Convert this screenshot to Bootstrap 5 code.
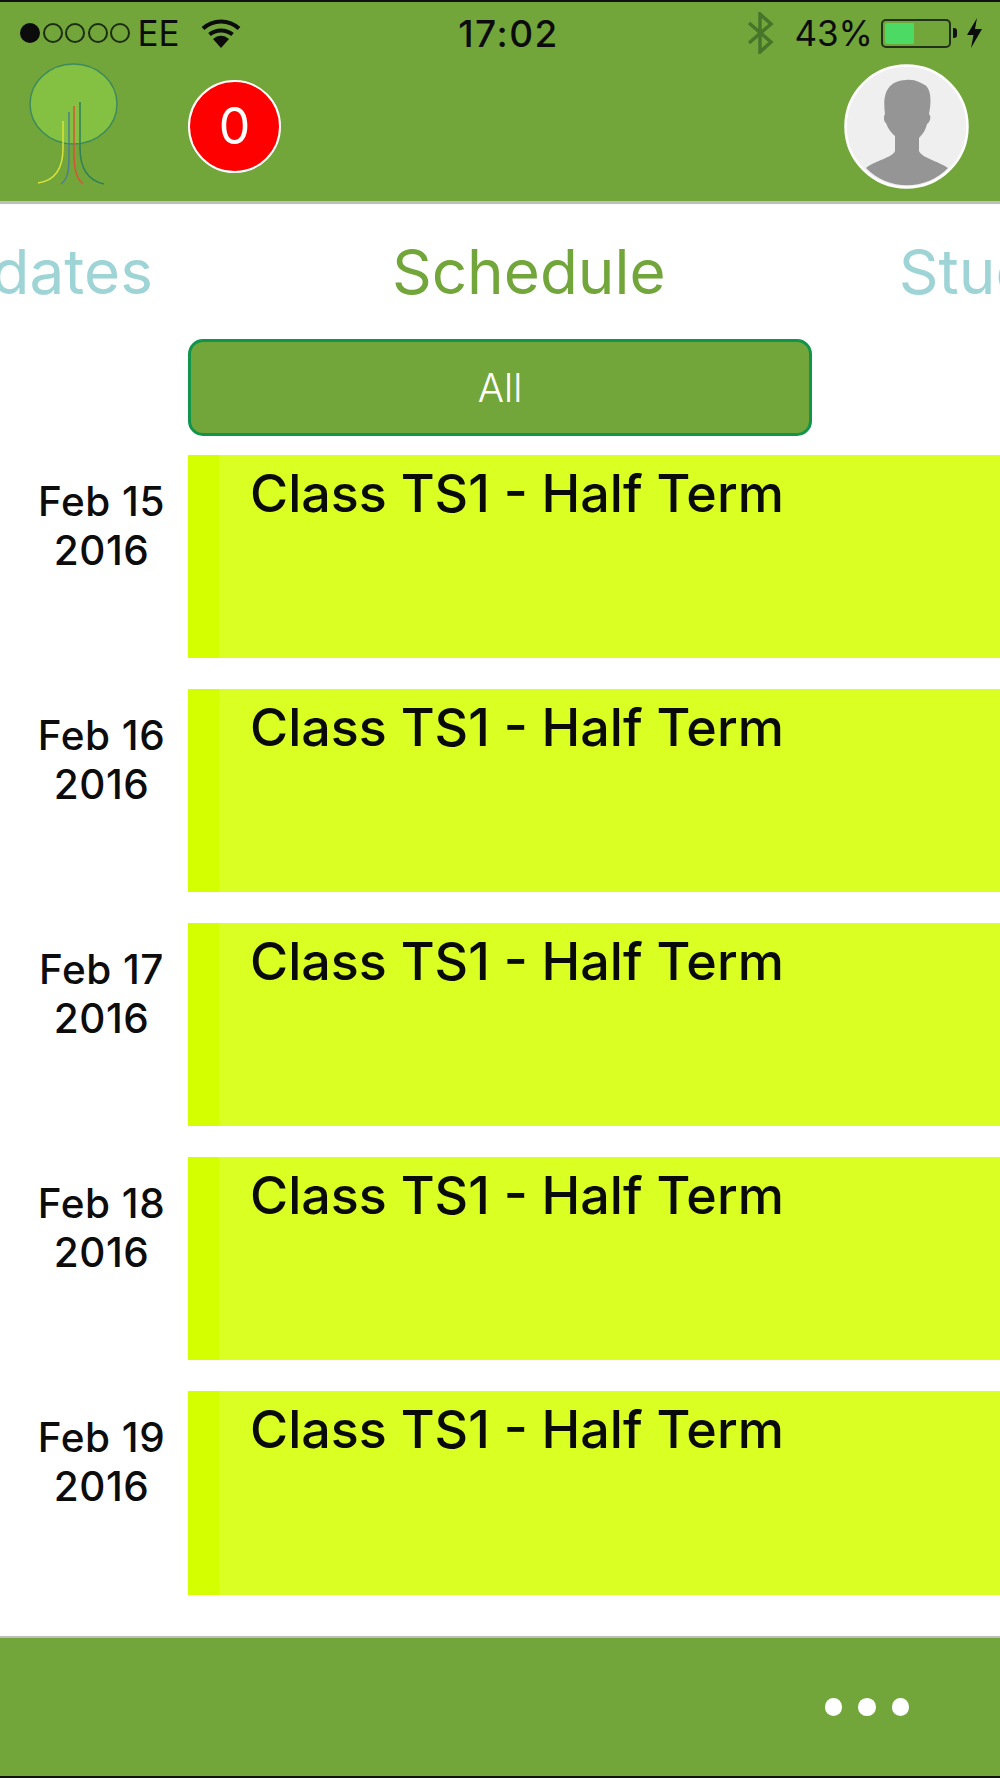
<!DOCTYPE html>
<html lang="en">
  <head>
    <meta charset="UTF-8" />
    <title>Schedule</title>
    <link
      href="https://cdn.jsdelivr.net/npm/bootstrap@5.3.0/dist/css/bootstrap.min.css"
      rel="stylesheet"
    />
    <style>
      html, body { height: 1778px; overflow: hidden; background: #fff; }
      body { font-family: Inter, "Liberation Sans", sans-serif; }

      /* header */
      .app-head { height: 204px; background: #72a63a; border-top: 2px solid #111; border-bottom: 3px solid #bdbdbd; }
      .status-row { height: 62px; padding: 0 17px 0 20px; color: #0c0c0c; font-size: 35px; line-height: 1; }
      .status-side { flex: 1 1 0; }
      .sig-dot { width: 20px; height: 20px; border: 2px solid #1c2c10; border-radius: 50%; margin-right: 2.5px; }
      .sig-dot.on { background: #0c0c0c; border-color: #0c0c0c; }
      .carrier { margin-left: 5px; }
      .wifi-mark { margin-left: 21px; }
      .clock { font-weight: 550; font-size: 37px; letter-spacing: 1.5px; margin-left: 14px; }
      .bat-box { width: 70px; height: 29px; border: 2px solid #22321a; border-radius: 5px; padding: 2px; }
      .bat-level { width: 29px; height: 100%; background: #4cd964; border-radius: 2px 0 0 2px; }
      .bat-nub { width: 4px; height: 10px; background: #111; border-radius: 0 3px 3px 0; margin: 0 9px 0 2px; }
      .bt-mark { margin-right: 19px; }
      .head-row { height: 137px; padding: 0 0 12px 28px; }
      .tree-logo { width: 94px; height: 124px; margin: 0 66px 3px 0; }
      .count-badge { width: 93px; height: 93px; background: #f00; border: 2px solid #fff; color: #fff; font-size: 50px; }
      .avatar-pic { width: 125px; height: 125px; margin-right: 31px; }

      /* tabs */
      .tab-strip { height: 135px; padding-left: 66px; overflow: hidden; white-space: nowrap; font-size: 62px; color: #9ed4d5; }
      .tab-on { color: #72a63a; margin: 0 233px 0 239px; }

      /* filter */
      .filter-wrap { padding-left: 188px; height: 116px; }
      .filter-pill { width: 624px; height: 97px; padding-top: 1px; background: #72a63a; border: 3px solid #12944c; border-radius: 15px; color: #fff; font-size: 39px; font-weight: 300; }

      /* schedule rows */
      .day-list { gap: 31px; }
      .day-row { height: 203px; }
      .day-row:last-child { height: 204px; }
      .day-date { width: 188px; padding-top: 22px; padding-left: 15px; text-align: center; font-size: 40.5px; line-height: 49px; font-weight: 550; letter-spacing: 0.5px; color: #0c0c0c; }
      .day-strip { width: 31px; background: #d4ff00; }
      .day-body { background: #daff22; padding: 7px 0 0 31px; font-size: 52px; line-height: 64px; font-weight: 550; color: #0a0a0a; }

      /* footer */
      .app-foot { position: fixed; left: 0; right: 0; bottom: 0; height: 142px; background: #72a63a; border-top: 2px solid #bdbdbd; border-bottom: 2px solid #111; padding-right: 91px; }
      .foot-dot { width: 17.5px; height: 17.5px; background: #fff; border-radius: 50%; margin-left: 16px; }
    </style>
  </head>
  <body>
    <!-- header -->
    <header class="app-head">
      <div class="status-row d-flex align-items-center">
        <div class="status-side d-flex align-items-center">
          <span class="sig-dot on"></span>
          <span class="sig-dot"></span>
          <span class="sig-dot"></span>
          <span class="sig-dot"></span>
          <span class="sig-dot"></span>
          <span class="carrier">EE</span>
          <svg class="wifi-mark" width="40" height="30" viewBox="0 0 40 30">
            <path d="M2 10.5C12 1 28 1 38 10.5" fill="none" stroke="#0c0c0c" stroke-width="4" />
            <path d="M8.5 16.5C15 11 25 11 31.5 16.5" fill="none" stroke="#0c0c0c" stroke-width="4" />
            <path d="M12 21C17 16.5 23 16.5 28 21L20 30Z" fill="#0c0c0c" />
          </svg>
        </div>
        <div class="clock">17:02</div>
        <div class="status-side d-flex align-items-center justify-content-end">
          <svg class="bt-mark" width="28" height="42" viewBox="0 0 28 42">
            <path d="M2 11L24 30L13 40V2L24 12L2 31" fill="none" stroke="#47762b" stroke-width="3.5" />
          </svg>
          <span class="me-2">43%</span>
          <div class="bat-box"><div class="bat-level"></div></div>
          <div class="bat-nub"></div>
          <svg width="17" height="30" viewBox="0 0 17 30">
            <path d="M11 0L1 17H7.5L5 30L16 11H9Z" fill="#0c0c0c" />
          </svg>
        </div>
      </div>
      <div class="head-row d-flex align-items-center">
        <svg class="tree-logo" viewBox="0 0 94 124">
          <ellipse cx="45.5" cy="41" rx="43.5" ry="40" fill="#84c142" stroke="#3d8a5c" stroke-width="1.5" />
          <g fill="none" stroke-width="1.5">
            <path d="M35 58V85C35 108 25 118 10 120" stroke="#d9e23a" />
            <path d="M41 49V90C41 105 41 115 33 121" stroke="#4f7f8e" />
            <path d="M46 43V92C46 108 50 117 55 121" stroke="#d5553a" />
            <path d="M52 39V85C52 108 62 118 76 121" stroke="#2f7f58" />
          </g>
        </svg>
        <div class="count-badge rounded-circle d-flex align-items-center justify-content-center">0</div>
        <svg class="avatar-pic ms-auto" viewBox="0 0 125 125">
          <circle cx="62.5" cy="62.5" r="61" fill="#efefef" stroke="#fff" stroke-width="2.5" />
          <path d="M22 104C32 96 48 94 51 87V72C46 68 43 62 42 59C39 57 40 51 41 50C39 35 40 17 62 16C72 15 76 19 81 21C88 26 87 40 85 50C87 52 87 57 83 60C82 65 79 70 75 74V87C78 94 94 97 104 104C82 127 44 127 22 104Z" fill="#959595" />
        </svg>
      </div>
    </header>

    <!-- tabs -->
    <nav class="tab-strip d-flex align-items-center justify-content-center">
      <span>Updates</span>
      <span class="tab-on">Schedule</span>
      <span>Students</span>
    </nav>

    <!-- filter -->
    <div class="filter-wrap">
      <div class="filter-pill d-flex align-items-center justify-content-center">All</div>
    </div>

    <!-- schedule -->
    <main class="day-list d-flex flex-column" id="day-list"></main>

    <!-- footer -->
    <footer class="app-foot d-flex align-items-center justify-content-end">
      <span class="foot-dot"></span>
      <span class="foot-dot"></span>
      <span class="foot-dot"></span>
    </footer>

    <script>
      const list = document.getElementById("day-list");
      [15, 16, 17, 18, 19].forEach((day) => {
        const row = document.createElement("div");
        row.className = "day-row d-flex";
        row.innerHTML = `
          <div class="day-date">Feb ${day}<br />2016</div>
          <div class="day-strip"></div>
          <div class="day-body flex-grow-1">Class TS1 - Half Term</div>
        `;
        list.appendChild(row);
      });
    </script>
    <script src="https://cdn.jsdelivr.net/npm/bootstrap@5.3.0/dist/js/bootstrap.bundle.min.js"></script>
  </body>
</html>
